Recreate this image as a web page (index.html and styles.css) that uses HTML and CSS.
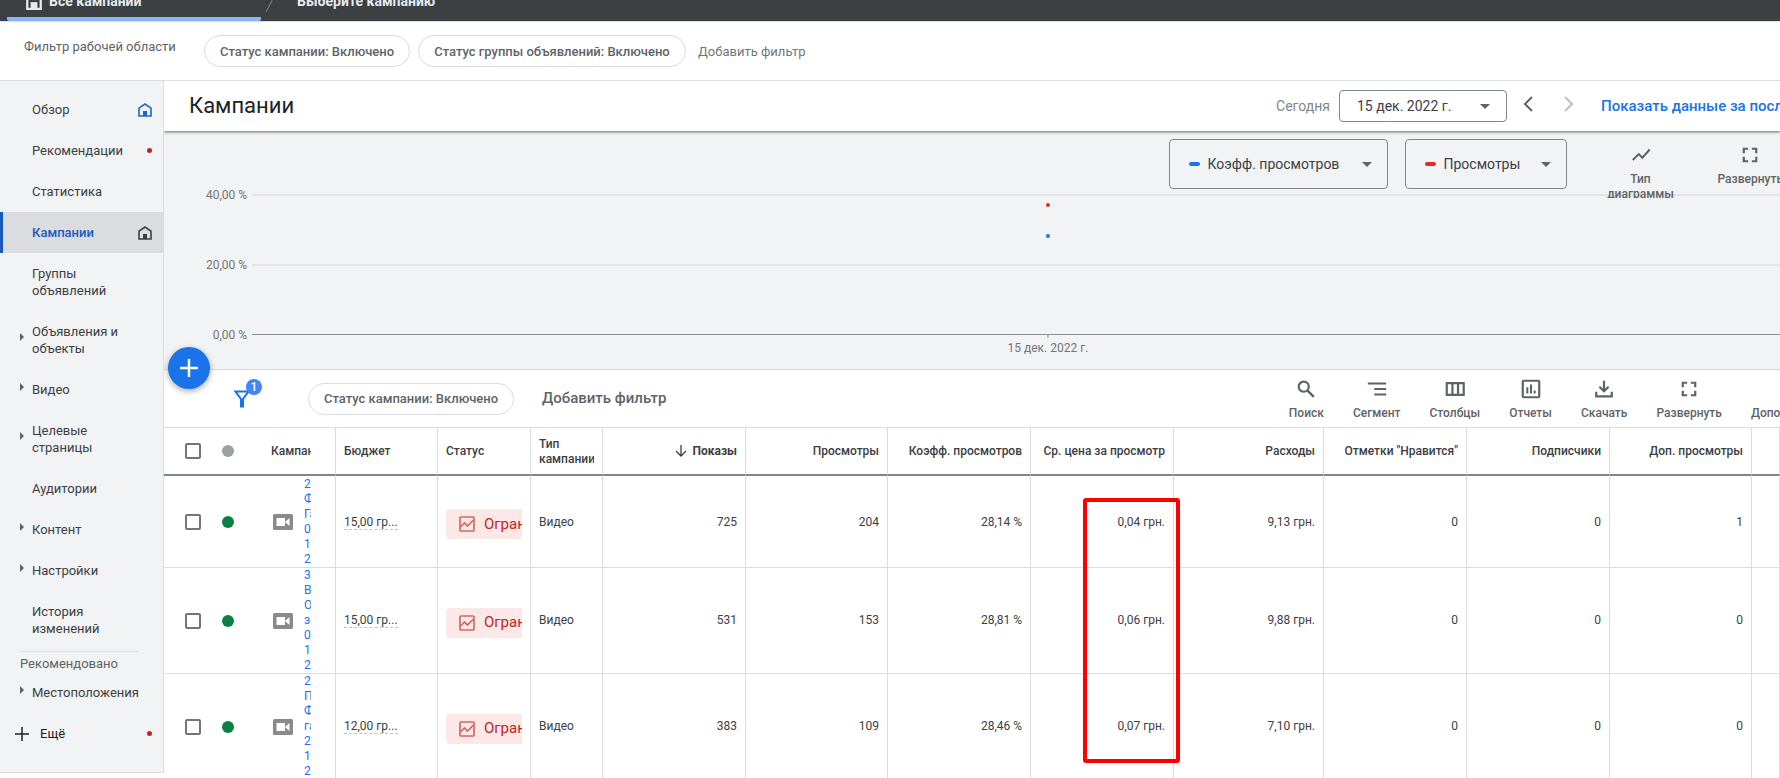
FILE: index.html
```html
<!DOCTYPE html>
<html lang="ru">
	<head>
		<meta charset="utf-8">
		<title>Кампании</title>
		<link rel="stylesheet" href="styles.css">
	</head>
	<body>
		<!-- общие иконки -->
		<svg class="sprite">
			<symbol id="home" viewBox="0 0 14 14"><path d="M1 5.2 7 1l6 4.2V13H1z" fill="none" stroke="currentColor" stroke-width="1.6"/><path d="M5 8h4v5H5z" fill="currentColor"/></symbol>
			<symbol id="caret" viewBox="0 0 4 8"><path d="M0 0l4 4-4 4z" fill="currentColor"/></symbol>
			<symbol id="drop" viewBox="0 0 10 5"><path d="M0 0h10L5 5z" fill="currentColor"/></symbol>
			<symbol id="expand" viewBox="0 0 24 24"><path d="M4 4h6v2.4H6.400V10H4zM14 4h6v6h-2.400V6.400H14zM4 14h2.400v3.600H10V20H4zM17.600 14H20v6h-6v-2.400h3.600z" fill="currentColor"/></symbol>
			<symbol id="video" viewBox="0 0 20 16"><rect width="20" height="16" rx="1.500" fill="#8a8a8a"/><path d="M3.500 4h8.500v8H3.500zM12 8l4.500-4v8z" fill="#fff"/></symbol>
			<symbol id="limit" viewBox="0 0 16 16"><rect x="1" y="1" width="14" height="14" rx="1" fill="none" stroke="currentColor" stroke-width="1.700"/><path d="M1.500 11l4-4 3 3L14.500 4" fill="none" stroke="currentColor" stroke-width="1.700"/></symbol>
		</svg>

		<header class="topbar">
			<a class="tab active" href="#"><svg class="tab-icon" viewBox="0 0 16 16"><path d="M2 6 8 2l6 4v9H2z" fill="none" stroke="currentColor" stroke-width="2"/><path d="M5 9h6v6H5z" fill="currentColor"/></svg>Все кампании</a>
			<svg class="slash" viewBox="0 0 12 20"><path d="M1 19 11 0" stroke="#80868b"/></svg>
			<a class="tab" href="#">Выберите кампанию</a>
		</header>

		<div class="workspace">
			<span class="workspace-label">Фильтр рабочей области</span>
			<button class="chip">Статус кампании: Включено</button>
			<button class="chip wide">Статус группы объявлений: Включено</button>
			<button class="add">Добавить фильтр</button>
		</div>

		<div class="page">
			<nav class="sidebar">
				<a class="item" href="#">Обзор<svg class="home"><use href="#home"/></svg></a>
				<a class="item" href="#">Рекомендации<i class="red"></i></a>
				<a class="item" href="#">Статистика</a>
				<a class="item current" href="#">Кампании<svg class="home"><use href="#home"/></svg></a>
				<a class="item" href="#">Группы<br>объявлений</a>
				<a class="item sub" href="#"><svg class="caret"><use href="#caret"/></svg>Объявления и<br>объекты</a>
				<a class="item sub" href="#"><svg class="caret"><use href="#caret"/></svg>Видео</a>
				<a class="item sub" href="#"><svg class="caret"><use href="#caret"/></svg>Целевые<br>страницы</a>
				<a class="item" href="#">Аудитории</a>
				<a class="item sub" href="#"><svg class="caret"><use href="#caret"/></svg>Контент</a>
				<a class="item sub" href="#"><svg class="caret"><use href="#caret"/></svg>Настройки</a>
				<a class="item" href="#">История<br>изменений</a>
				<p class="group">Рекомендовано</p>
				<a class="item sub" href="#"><svg class="caret"><use href="#caret"/></svg>Местоположения</a>
				<a class="item more" href="#"><svg class="plus" viewBox="0 0 14 14"><path d="M7 0v14M0 7h14" stroke="currentColor" stroke-width="1.500"/></svg>Ещё<i class="red"></i></a>
			</nav>

			<main class="content">
				<div class="title-bar">
					<h1>Кампании</h1>
					<label class="today" for="date">Сегодня</label>
					<span class="box date">
						<select id="date"><option>15 дек. 2022 г.</option></select>
						<svg class="drop"><use href="#drop"/></svg>
					</span>
					<button class="arrow" aria-label="Назад"><svg viewBox="0 0 10 16"><path d="M9 1 2 8l7 7" fill="none" stroke="currentColor" stroke-width="2"/></svg></button>
					<button class="arrow" aria-label="Вперёд" disabled><svg viewBox="0 0 10 16"><path d="M1 1l7 7-7 7" fill="none" stroke="currentColor" stroke-width="2"/></svg></button>
					<a class="last" href="#">Показать данные за последние</a>
				</div>

				<section class="chart">
					<div class="chart-tools">
						<label class="box metric wide"><i class="dash"></i>
							<select><option>Коэфф. просмотров</option></select>
							<svg class="drop"><use href="#drop"/></svg>
						</label>
						<label class="box metric"><i class="dash second"></i>
							<select><option>Просмотры</option></select>
							<svg class="drop"><use href="#drop"/></svg>
						</label>
						<button class="tool type"><svg viewBox="0 0 24 24"><path d="M3 17.500 9.500 11l4 4L21.500 6" fill="none" stroke="currentColor" stroke-width="2.200"/></svg>Тип<br>диаграммы</button>
						<button class="tool"><svg><use href="#expand"/></svg>Развернуть</button>
					</div>
					<svg class="plot">
						<g stroke="#e3e4e6" stroke-width="2">
							<line x1="88" y1="64" x2="100%" y2="64"/>
							<line x1="88" y1="134" x2="100%" y2="134"/>
						</g>
						<line x1="88" y1="203.500" x2="100%" y2="203.500" stroke="#8c8e91"/>
						<line x1="54.7%" y1="203" x2="54.7%" y2="207" stroke="#8c8e91"/>
						<circle cx="54.7%" cy="74" r="2" fill="#d93025"/>
						<circle cx="54.7%" cy="105" r="2" fill="#1a73e8"/>
						<g class="axis" text-anchor="end">
							<text x="83" y="68">40,00 %</text>
							<text x="83" y="138">20,00 %</text>
							<text x="83" y="208">0,00 %</text>
						</g>
						<text class="axis" x="54.7%" y="221" text-anchor="middle">15 дек. 2022 г.</text>
					</svg>
					<button class="fab" aria-label="Создать"><svg viewBox="0 0 18 18"><path d="M9 0v18M0 9h18" stroke="currentColor" stroke-width="2.500"/></svg></button>
				</section>

				<div class="table-bar">
					<button class="funnel" aria-label="Фильтр">
						<svg viewBox="0 0 16 18"><path d="M1.500 1.500h13L9 9v7.500H7V9z" fill="none" stroke="currentColor" stroke-width="2"/></svg>
						<span class="badge">1</span>
					</button>
					<button class="chip">Статус кампании: Включено</button>
					<button class="add strong">Добавить фильтр</button>
					<div class="tools">
						<button class="tool"><svg viewBox="0 0 24 24"><circle cx="9.500" cy="9.500" r="5.500" fill="none" stroke="currentColor" stroke-width="2.400"/><path d="M13.500 13.500 20.500 20.500" stroke="currentColor" stroke-width="2.600"/></svg>Поиск</button>
						<button class="tool"><svg viewBox="0 0 24 24"><path d="M2 6h20M9 12h13M9 18h13" stroke="currentColor" stroke-width="2.200"/></svg>Сегмент</button>
						<button class="tool"><svg viewBox="0 0 24 24"><path d="M3 5.500h18.500v13H3zM9.200 5.500v13M15.300 5.500v13" fill="none" stroke="currentColor" stroke-width="2.400"/></svg>Столбцы</button>
						<button class="tool"><svg viewBox="0 0 24 24"><rect x="3" y="3" width="18" height="18" rx="1" fill="none" stroke="currentColor" stroke-width="2.400"/><path d="M8 10v7M12 7v10M16 13.500V17" stroke="currentColor" stroke-width="2.200"/></svg>Отчеты</button>
						<button class="tool"><svg viewBox="0 0 24 24"><path d="M12 3v11M7 9.500l5 5 5-5M3.500 15v5h17v-5" fill="none" stroke="currentColor" stroke-width="2.400"/></svg>Скачать</button>
						<button class="tool"><svg><use href="#expand"/></svg>Развернуть</button>
						<button class="tool"><svg></svg>Дополнительно</button>
					</div>
				</div>

				<table class="grid">
					<colgroup>
						<col class="c-check"><col class="c-dot"><col class="c-name"><col class="c-budget"><col class="c-status"><col class="c-type">
						<col class="c-num"><col class="c-views"><col class="c-num"><col class="c-num"><col class="c-cost"><col class="c-num"><col class="c-num"><col class="c-views"><col>
					</colgroup>
					<thead>
						<tr>
							<th class="check"><input type="checkbox" aria-label="Выбрать все"></th>
							<th class="state"><i class="dot"></i></th>
							<th class="name"><div class="clip">Кампания</div></th>
							<th>Бюджет</th>
							<th>Статус</th>
							<th><div class="clip">Тип кампании</div></th>
							<th class="num sorted"><svg class="sort" viewBox="0 0 12 12"><path d="M6 0v11M1 6l5 5 5-5" fill="none" stroke="currentColor" stroke-width="1.300"/></svg>Показы</th>
							<th class="num">Просмотры</th>
							<th class="num">Коэфф. просмотров</th>
							<th class="num">Ср. цена за просмотр</th>
							<th class="num">Расходы</th>
							<th class="num">Отметки "Нравится"</th>
							<th class="num">Подписчики</th>
							<th class="num">Доп. просмотры</th>
							<th></th>
						</tr>
					</thead>
					<tbody>
						<tr>
							<td class="check"><input type="checkbox" aria-label="Выбрать"></td>
							<td class="state"><i class="dot on"></i></td>
							<td class="name"><div class="clip"><svg class="video"><use href="#video"/></svg><a href="#">2<br>Ф<br>Га<br>0<br>1<br>2</a></div></td>
							<td><span class="budget">15,00 гр...</span></td>
							<td><div class="clip limited"><span class="status"><svg><use href="#limit"/></svg>Огранич</span></div></td>
							<td>Видео</td>
							<td class="num">725</td>
							<td class="num">204</td>
							<td class="num">28,14 %</td>
							<td class="num marked">0,04 грн.<i class="frame"></i></td>
							<td class="num">9,13 грн.</td>
							<td class="num">0</td>
							<td class="num">0</td>
							<td class="num">1</td>
							<td></td>
						</tr>
						<tr>
							<td class="check"><input type="checkbox" aria-label="Выбрать"></td>
							<td class="state"><i class="dot on"></i></td>
							<td class="name"><div class="clip"><svg class="video"><use href="#video"/></svg><a href="#">3<br>В<br>О<br>з<br>0<br>1<br>2</a></div></td>
							<td><span class="budget">15,00 гр...</span></td>
							<td><div class="clip limited"><span class="status"><svg><use href="#limit"/></svg>Огранич</span></div></td>
							<td>Видео</td>
							<td class="num">531</td>
							<td class="num">153</td>
							<td class="num">28,81 %</td>
							<td class="num">0,06 грн.</td>
							<td class="num">9,88 грн.</td>
							<td class="num">0</td>
							<td class="num">0</td>
							<td class="num">0</td>
							<td></td>
						</tr>
						<tr>
							<td class="check"><input type="checkbox" aria-label="Выбрать"></td>
							<td class="state"><i class="dot on"></i></td>
							<td class="name"><div class="clip"><svg class="video"><use href="#video"/></svg><a href="#">2<br>П<br>Ф<br>га<br>2<br>1<br>2</a></div></td>
							<td><span class="budget">12,00 гр...</span></td>
							<td><div class="clip limited"><span class="status"><svg><use href="#limit"/></svg>Огранич</span></div></td>
							<td>Видео</td>
							<td class="num">383</td>
							<td class="num">109</td>
							<td class="num">28,46 %</td>
							<td class="num">0,07 грн.</td>
							<td class="num">7,10 грн.</td>
							<td class="num">0</td>
							<td class="num">0</td>
							<td class="num">0</td>
							<td></td>
						</tr>
					</tbody>
				</table>
			</main>
		</div>
	</body>
</html>
```
FILE: styles.css
```css
* {
	margin: 0;
	padding: 0;
	box-sizing: border-box;
}

html,
body {
	height: 100%;
}

body {
	display: flex;
	flex-direction: column;
	overflow: hidden;
	font: 13px/17px Roboto, "Liberation Sans", sans-serif;
	color: #3c4043;
	background-color: #fff;
}

a {
	color: inherit;
	text-decoration: none;
}

button,
select {
	font: inherit;
	color: inherit;
	border: none;
	background: none;
	cursor: pointer;
}

select {
	appearance: none;
	outline: none;
}

svg {
	flex: none;
}

.sprite {
	display: none;
}

/* верхняя панель */
.topbar {
	display: flex;
	flex: none;
	align-items: flex-end;
	height: 22px;
	padding-left: 7px;
	overflow: hidden;
	border-bottom: 1px solid #dadce0;
	background-color: #3c4043;
	color: #e8eaed;
	font-size: 14px;
	font-weight: 700;
}

.tab {
	display: flex;
	align-items: center;
	padding-bottom: 11px;
}

.tab.active {
	width: 254px;
	padding-left: 18px;
	padding-bottom: 7px;
	border-bottom: 4px solid #8ab4f8;
	border-radius: 0 0 2px 2px;
}

.tab-icon {
	width: 18px;
	height: 18px;
	margin-right: 6px;
}

.slash {
	width: 12px;
	height: 20px;
	margin: 0 20px 8px 4px;
}

/* фильтры */
.workspace {
	display: flex;
	flex: none;
	align-items: center;
	height: 59px;
	padding-left: 24px;
	border-bottom: 1px solid #dadce0;
	color: #5f6368;
}

.workspace-label {
	width: 180px;
	padding-bottom: 9px;
}

.chip {
	min-width: 206px;
	height: 32px;
	padding: 0 12px;
	margin-right: 8px;
	border: 1px solid #dadce0;
	border-radius: 16px;
	color: #5f6368;
	font-weight: 500;
	white-space: nowrap;
}

.chip.wide {
	min-width: 268px;
}

.add {
	padding-left: 4px;
	color: #757575;
	white-space: nowrap;
}

.add.strong {
	padding-left: 20px;
	color: #5f6368;
	font-size: 15px;
	font-weight: 500;
}

.page {
	display: flex;
	flex: 1;
	min-height: 0;
}

/* боковое меню */
.sidebar {
	flex: none;
	align-self: flex-start;
	width: 164px;
	padding: 8px 0 18px;
	border-right: 1px solid #dadce0;
	border-bottom: 1px solid #dadce0;
	background-color: #f1f3f4;
}

.item {
	display: flex;
	align-items: center;
	padding: 12px 11px 12px 32px;
}

.item.sub {
	padding-left: 20px;
}

.item.current {
	padding-left: 29px;
	border-left: 3px solid #185abc;
	background-color: #dadce0;
	color: #185abc;
	font-weight: 500;
}

.home {
	width: 14px;
	height: 14px;
	margin-left: auto;
	color: #1967d2;
}

.current .home {
	color: #3c4043;
}

.red {
	width: 5px;
	height: 5px;
	margin-left: auto;
	border-radius: 50%;
	background-color: #c5221f;
}

.caret {
	width: 4px;
	height: 8px;
	margin: 0 8px 6px 0;
	color: #5f6368;
}

.group {
	margin: 2px 24px 0 20px;
	padding-top: 4px;
	border-top: 1px solid #dadce0;
	color: #5f6368;
	line-height: 16px;
}

.item.more {
	padding-left: 15px;
	color: #202124;
}

.plus {
	width: 14px;
	height: 14px;
	margin-right: 11px;
}

/* заголовок страницы */
.content {
	flex: 1;
	min-width: 0;
	overflow: hidden;
}

.title-bar {
	position: relative;
	z-index: 1;
	display: flex;
	align-items: center;
	height: 50px;
	padding-left: 25px;
	background-color: #fff;
	box-shadow: 0 1px 3px rgba(0, 0, 0, .6);
	white-space: nowrap;
}

.title-bar h1 {
	margin-right: auto;
	color: #202124;
	font-size: 22px;
	font-weight: 400;
	line-height: 28px;
}

.today {
	margin-right: 9px;
	color: #80868b;
	font-size: 14px;
}

.box {
	display: flex;
	align-items: center;
	border: 1px solid #80868b;
	border-radius: 4px;
	font-size: 14px;
}

.box .drop {
	margin-left: auto;
}

.date {
	min-width: 168px;
	height: 32px;
	padding: 0 16px 0 17px;
}

.drop {
	width: 10px;
	height: 5px;
	color: #5f6368;
}

.arrow {
	width: 41px;
	height: 32px;
	color: #5f6368;
}

.arrow svg {
	width: 10px;
	height: 16px;
}

.arrow:disabled {
	color: #bdc1c6;
}

.last {
	width: 179px;
	margin-left: 12px;
	color: #1a73e8;
	font-size: 15px;
	font-weight: 500;
}

/* график */
.chart {
	position: relative;
	height: 239px;
	border-bottom: 1px solid #dadce0;
	background-color: #f1f3f4;
}

.chart-tools {
	position: absolute;
	top: 8px;
	right: -3px;
	display: flex;
	align-items: flex-start;
}

.metric {
	min-width: 162px;
	height: 50px;
	margin-right: 17px;
	padding: 0 15px 0 19px;
	gap: 8px;
}

.metric.wide {
	min-width: 219px;
}

.dash {
	width: 11px;
	height: 4px;
	border-radius: 2px;
	background-color: #1a73e8;
}

.dash.second {
	background-color: #d93025;
}

.tool {
	display: flex;
	flex-direction: column;
	align-items: center;
	padding: 2px 12px 0;
	color: #5f6368;
	font-size: 12px;
	font-weight: 500;
	line-height: 15px;
	white-space: nowrap;
}

.tool svg {
	width: 22px;
	height: 22px;
	margin-bottom: 6px;
}

.chart-tools .tool {
	height: 59px;
	padding: 5px 0 0;
	overflow: hidden;
}

.chart-tools .type {
	width: 72px;
	margin: 0 41px 0 21px;
}

.plot {
	display: block;
	width: 100%;
	height: 238px;
}

.axis {
	fill: #757575;
	font-size: 12px;
}

.fab {
	position: absolute;
	bottom: -20px;
	left: 4px;
	display: flex;
	align-items: center;
	justify-content: center;
	width: 42px;
	height: 42px;
	border-radius: 50%;
	background-color: #1a73e8;
	box-shadow: 0 2px 6px rgba(0, 0, 0, .35);
	color: #fff;
}

.fab svg {
	width: 18px;
	height: 18px;
}

/* панель таблицы */
.table-bar {
	display: flex;
	align-items: center;
	height: 58px;
	padding-left: 69px;
	border-bottom: 1px solid #dadce0;
}

.funnel {
	position: relative;
	width: 18px;
	height: 18px;
	margin-right: 57px;
	color: #1a73e8;
}

.funnel svg {
	width: 16px;
	height: 18px;
}

.badge {
	position: absolute;
	top: -11px;
	left: 13px;
	width: 16px;
	height: 16px;
	border-radius: 50%;
	background-color: #4285f4;
	color: #fff;
	font-size: 12px;
	font-weight: 500;
	line-height: 16px;
	text-align: center;
}

.tools {
	display: flex;
	gap: 5px;
	margin-left: auto;
	margin-right: -72px;
}

/* таблица */
.grid {
	width: 100%;
	table-layout: fixed;
	border-collapse: separate;
	border-spacing: 0;
	font-size: 12px;
	line-height: 15px;
}

.c-check { width: 50px; }
.c-dot { width: 36px; }
.c-name { width: 86px; }
.c-budget { width: 102px; }
.c-status { width: 93px; }
.c-type { width: 72px; }
.c-num { width: 143px; }
.c-views { width: 142px; }
.c-cost { width: 150px; }

.grid th,
.grid td {
	padding: 0 8px;
	border-right: 1px solid #dadce0;
	border-bottom: 1px solid #dadce0;
	text-align: left;
	vertical-align: middle;
}

.grid th {
	height: 48px;
	padding-top: 1px;
	border-bottom: 2px solid #80868b;
	font-weight: 500;
}

.grid tbody tr:first-child td {
	border-top: 1px solid #fff;
}

.grid .check,
.grid .state {
	border-right: none;
}

.grid .check {
	padding: 0 0 0 21px;
}

.grid .state {
	padding: 0 0 0 8px;
}

.grid .name {
	padding: 0 24px 0 21px;
}

.grid td.name {
	padding-left: 23px;
}

.grid .num {
	text-align: right;
	white-space: nowrap;
}

.grid .sorted {
	font-weight: 700;
}

.clip {
	overflow: hidden;
}

.name .clip {
	display: flex;
	align-items: center;
}

.name a {
	color: #1a73e8;
}

.grid input {
	display: block;
	width: 16px;
	height: 16px;
	appearance: none;
	border: 2px solid #757575;
	border-radius: 2px;
}

.dot {
	display: block;
	width: 12px;
	height: 12px;
	border-radius: 50%;
	background-color: #9aa0a6;
}

.dot.on {
	background-color: #0b8043;
}

.video {
	width: 20px;
	height: 16px;
	margin-right: 11px;
}

.budget {
	border-bottom: 1px dashed #bdc1c6;
}

.limited {
	padding-top: 4px;
}

.status {
	display: inline-flex;
	align-items: center;
	height: 30px;
	padding-left: 13px;
	border-radius: 4px;
	background-color: #fce8e6;
	color: #c5221f;
	font-size: 15px;
	vertical-align: top;
}

.status svg {
	width: 16px;
	height: 16px;
	margin-right: 9px;
	color: #cf6b61;
}

.sort {
	width: 12px;
	height: 12px;
	margin-right: 5px;
	vertical-align: -2px;
}

/* рамка вокруг цены за просмотр */
.marked {
	position: relative;
}

.frame {
	position: absolute;
	top: 21px;
	right: -7px;
	width: 97px;
	height: 265px;
	border: 4px solid #f00;
	border-radius: 3px;
}
```
